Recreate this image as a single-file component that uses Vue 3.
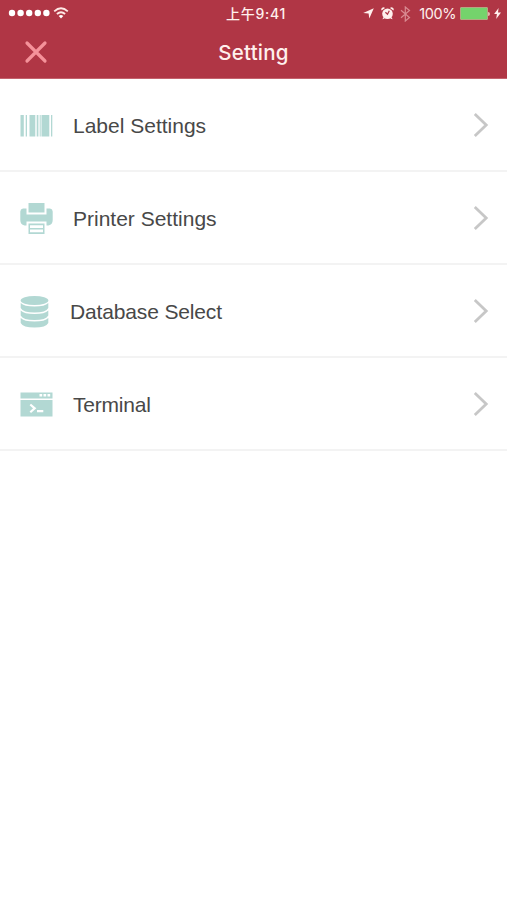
<template>
  <div class="setting-page">
    <header class="header">
      <div class="status-bar">
        <div class="status-left">
          <svg class="signal" width="42" height="8" viewBox="0 0 42 8">
            <circle v-for="n in 5" :key="n" :cx="n * 8.6 - 4.6" cy="4" r="3.2" />
          </svg>
          <svg class="wifi" width="16" height="12" viewBox="0 0 16 12">
            <path d="M1.2 4.3Q8-1.7 14.8 4.3" />
            <path d="M3.9 7Q8 3.4 12.1 7" />
            <path class="solid" d="M5.7 9Q8 7.1 10.3 9L8 11.4Z" />
          </svg>
        </div>
        <div class="time">上午9:41</div>
        <div class="status-right">
          <svg class="location" width="11" height="11" viewBox="0 0 11 11"><path d="M10.8.3L6.3 10.6 5.6 5.4.2 4.9Z" /></svg>
          <svg class="alarm" width="13" height="13" viewBox="0 0 13 13">
            <path d="M.6 3.6A2.2 2.2 0 0 1 4 .9ZM12.4 3.6A2.2 2.2 0 0 0 9 .9ZM2.6 10L1.4 12.2 3.8 11.4ZM10.4 10L11.6 12.2 9.2 11.4Z" />
            <circle cx="6.5" cy="6.7" r="5.3" />
            <path class="hands" d="M4.4 5.2L6.5 7.2 8.3 3.8" />
          </svg>
          <svg class="bluetooth" width="11" height="16" viewBox="0 0 11 16"><path d="M1 4.2L9.5 11.5 5.3 15V1L9.5 4.5 1 11.8" /></svg>
          <span class="percent">100%</span>
          <span class="battery"></span>
          <span class="battery-tip"></span>
          <svg class="bolt" width="7" height="11" viewBox="0 0 7 11"><path d="M4.6 0L.1 6H2.9L2.2 11 7 4.6H4Z" /></svg>
        </div>
      </div>
      <div class="nav-bar">
        <button class="close" aria-label="Close">
          <svg width="24" height="24" viewBox="0 0 24 24"><path d="M3 3L21 21M21 3L3 21" /></svg>
        </button>
        <h1>Setting</h1>
      </div>
    </header>
    <ul class="list">
      <li v-for="item in items" :key="item.icon" class="item" :class="item.icon">
        <svg v-if="item.icon === 'barcode'" class="icon" width="33" height="34" viewBox="0 0 33 34">
          <path d="M.5 6h3.3v21.500H.5ZM5.700 6h1.300v21.500H5.700ZM9.500 6h5.800v21.500H9.500ZM16.700 6h1.700v21.500H16.700Z" />
          <path d="M19.700 6h1v21.500H19.700ZM21.500 6h7.800v21.500H21.500ZM31 6h1.300v21.500H31Z" />
        </svg>
        <svg v-else-if="item.icon === 'printer'" class="icon" width="33" height="34" viewBox="0 0 33 34">
          <path d="M8.500 1H24.500V10.500H8.500Z" />
          <path d="M3 6.500H6.500V12.500H26.500V6.500H30Q32.700 7 32.700 9.500V18Q32.700 22.500 28.500 23.500H26.500V19.500H6.500V23.500H4.500Q.3 22.500.3 18V9.500Q.3 7 3 6.500Z" />
          <path fill-rule="evenodd" d="M8.500 21.500H24.500V32H8.500ZM10 23.300V26H23V23.300ZM10 27.500V30.300H23V27.500Z" />
        </svg>
        <svg v-else-if="item.icon === 'database'" class="icon" width="29" height="34" viewBox="0 0 29 34">
          <ellipse cx="14.500" cy="5.500" rx="13.800" ry="4.500" />
          <path v-for="n in 3" :key="n" :d="layerPath(n)" />
        </svg>
        <svg v-else class="icon" width="33" height="34" viewBox="0 0 33 34">
          <path d="M.5 4.500H32.500V10.500H.5ZM.5 12H32.500V28.500H.5Z" />
          <path class="cut" d="M19.500 6h2.700v2.600h-2.700ZM23.500 6h2.700v2.600h-2.700ZM27.500 6h2.700v2.600h-2.700ZM17 22h6.300v2.200h-6.300Z" />
          <path class="prompt" d="M10.300 16.500L14.700 20.300 10.300 24.200" />
        </svg>
        <span class="label">{{ item.label }}</span>
        <svg class="arrow" width="16" height="26" viewBox="0 0 16 26"><path d="M1.800 2L13.200 13 1.800 24" /></svg>
      </li>
    </ul>
  </div>
</template>

<script setup>
const items = [
  { icon: 'barcode', label: 'Label Settings' },
  { icon: 'printer', label: 'Printer Settings' },
  { icon: 'database', label: 'Database Select' },
  { icon: 'terminal', label: 'Terminal' }
]

// curved band of the database cylinder, n counts from the top
const layerPath = (n) => {
  const y = n * 7.5
  return `M.7 ${y + 0.5}Q4 ${y + 4} 14.5 ${y + 4}T28.3 ${y + 0.5}V${y + 5.5}Q26 ${y + 10} 14.5 ${y + 10}T.7 ${y + 5.5}Z`
}
</script>

<style>
body { background: #fff; }
</style>

<style scoped>
.setting-page { min-height: 900px; background: #fff; font-family: "Liberation Sans", "Noto Sans CJK SC", sans-serif; }
.header { height: 79px; box-sizing: border-box; background: #b03645; color: #fff0ed; border-bottom: 1px solid #c4626d; }
.status-bar { display: grid; grid-template-columns: 1fr auto 1fr; align-items: center; height: 27px; padding: 0 6px 0 8px; }
.status-left, .status-right { display: flex; align-items: center; }
.status-left { gap: 3px; margin-top: -1px; }
.signal { fill: #fff; }
.wifi { fill: none; stroke: #ffe9e6; stroke-width: 1.8; }
.wifi .solid { fill: #fff; stroke: none; }
.time { padding-left: 3px; font: 500 14px/26px Inter, "Noto Sans CJK SC", sans-serif; letter-spacing: .7px; }
.status-right { justify-content: flex-end; }
.location, .alarm, .bolt { fill: #fff0ed; }
.alarm { margin-left: 7px; }
.hands { fill: none; stroke: #b03645; stroke-width: 1.2; }
.bluetooth { margin: 0 8px 0 6px; fill: none; stroke: #d98b92; stroke-width: 1.2; }
.percent { font: 400 14.5px/26px Inter, sans-serif; letter-spacing: -.4px; }
.battery { width: 26px; height: 11px; margin-left: 4px; background: #74d36c; border: 1px solid #b4a782; border-radius: 1px; }
.battery-tip { width: 2px; height: 4px; margin-right: 4px; background: #e5b5ad; border-radius: 0 2px 2px 0; }
.nav-bar { display: grid; grid-template-columns: 72px 1fr 72px; align-items: center; height: 50px; }
.close { display: flex; width: 24px; height: 24px; margin: -1px 0 0 24px; padding: 0; border: none; background: none; }
.close path { fill: none; stroke: #f5929a; stroke-width: 3.2; stroke-linecap: round; }
.nav-bar h1 { margin: 2px 0 0; font: 500 20.5px/26px Inter, sans-serif; letter-spacing: .2px; text-align: center; }
.list { margin: 0; padding: 0; list-style: none; }
.item { display: flex; align-items: center; height: 93px; box-sizing: border-box; padding: 2px 18px 0 20px; border-bottom: 2px solid #f3f3f3; }
.icon { flex: none; fill: #b2d8d3; }
.cut { fill: #fff; }
.prompt { fill: none; stroke: #fff; stroke-width: 2.2; }
.label { flex: 1; margin-left: 20px; color: #484848; font-size: 21px; line-height: 28px; }
.database .label { margin-left: 21px; letter-spacing: -.15px; }
.terminal .label { letter-spacing: -.2px; }
.arrow { margin-bottom: 1px; fill: none; stroke: #c7c7c7; stroke-width: 2.8; }
</style>
